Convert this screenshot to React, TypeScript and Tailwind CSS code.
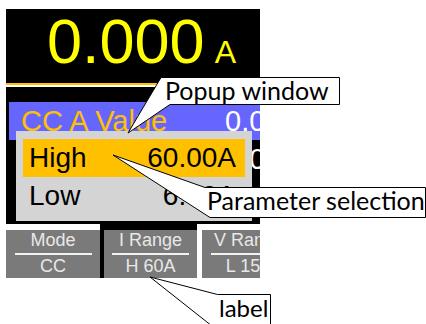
const rows = [
  { label: "CC A Value", value: "0.000A", active: true },
  { label: "CC B Value", value: "0.000A", active: false },
  { label: "Slew Rate", value: "0.000A/us", active: false },
];

const options = [
  { name: "High", value: "60.00A", selected: true },
  { name: "Low", value: "6.00A", selected: false },
];

const tabs = [
  { title: "Mode", value: "CC" },
  { title: "I Range", value: "H 60A", selected: true },
  { title: "V Range", value: "L 15V" },
];

function Tab({ title, value }: { title: string; value: string }) {
  return (
    <div className="flex h-[48px] w-full flex-col items-center bg-[#7a7a7a] text-[18px] leading-[20px] text-[#e8e8e8]">
      <span className="whitespace-nowrap">{title}</span>
      <div className="mt-[3px] h-[2px] w-[77px] shrink-0 bg-[#f2f2f2]" />
      <span className="mt-[1px] whitespace-nowrap">{value}</span>
    </div>
  );
}

function Screen() {
  return (
    <div className="relative h-[215px] w-[254px] overflow-hidden bg-black">
      <div className="flex h-[74px] items-baseline pl-[41px] pt-[1px] text-[#ffff00]">
        <span className="text-[63px] leading-none">0.000</span>
        <span className="ml-[10px] text-[32px] leading-none">A</span>
      </div>
      <div className="h-[2px] bg-[#ffc000]" />
      <div className="h-[2px] bg-white" />

      <div className="flex flex-col pt-[15px]">
        {rows.map((r) => (
          <div
            key={r.label}
            className={
              r.active
                ? "ml-[3px] flex h-[38px] items-center whitespace-nowrap bg-[#6666ff] text-[29px] leading-none"
                : "ml-[3px] flex h-[38px] items-center whitespace-nowrap text-[29px] leading-none"
            }
          >
            <span className="w-[216px] shrink-0 pl-[12px] text-[#ffc000]">{r.label}</span>
            <span className="text-white">{r.value}</span>
          </div>
        ))}
      </div>

      {/* popup list */}
      <div className="absolute left-[10px] top-[122px] flex h-[90px] w-[236px] flex-col bg-[#d4d4d4] px-[7px] pt-[8px]">
        {options.map((o) => (
          <div
            key={o.name}
            className={
              o.selected
                ? "flex h-[38px] items-center justify-between bg-[#ffc000] pl-[6px] pr-[9px] text-[28px] leading-none text-black"
                : "flex h-[38px] items-center justify-between pl-[6px] pr-[9px] text-[28px] leading-none text-black"
            }
          >
            <span>{o.name}</span>
            <span>{o.value}</span>
          </div>
        ))}
      </div>
    </div>
  );
}

function Callouts() {
  return (
    <>
      <svg className="pointer-events-none absolute left-0 top-0" width="426" height="324" viewBox="0 0 426 324">
        <polygon
          points="128,133 161,77.5 339.5,77.5 339.5,104.5 170,104.5"
          fill="white"
          stroke="black"
          strokeWidth="1"
        />
        <polygon
          points="113,155 205,187.5 425.5,187.5 425.5,217.5 210,217.5"
          fill="white"
          stroke="black"
          strokeWidth="1"
        />
        <polygon
          points="150,277 217.5,294.5 270.5,294.5 270.5,330 217,330"
          fill="white"
          stroke="black"
          strokeWidth="1"
        />
      </svg>
      <div className="absolute left-[165px] top-[78px] whitespace-nowrap font-['Lato',sans-serif] text-[25px] leading-none text-black">
        Popup window
      </div>
      <div className="absolute left-[207px] top-[188px] whitespace-nowrap font-['Lato',sans-serif] text-[25px] leading-none text-black">
        Parameter selection
      </div>
      <div className="absolute left-[219px] top-[296px] whitespace-nowrap font-['Lato',sans-serif] text-[24px] leading-none text-black">
        label
      </div>
    </>
  );
}

export default function App() {
  return (
    <div className="relative h-[324px] w-[426px] overflow-hidden bg-white font-['Liberation_Sans',Arial,sans-serif]">
      <div className="flex flex-col pl-[6px] pt-[9px]">
        <Screen />
        <div className="flex h-[54px] w-[254px] overflow-hidden">
          <div className="mt-[6px] w-[94px] shrink-0">
            <Tab title={tabs[0].title} value={tabs[0].value} />
          </div>
          <div className="w-[97px] shrink-0 border-l-[4px] border-t-[6px] border-black">
            <Tab title={tabs[1].title} value={tabs[1].value} />
          </div>
          <div className="ml-[5px] mt-[6px] w-[94px] shrink-0">
            <Tab title={tabs[2].title} value={tabs[2].value} />
          </div>
        </div>
      </div>
      <Callouts />
    </div>
  );
}
